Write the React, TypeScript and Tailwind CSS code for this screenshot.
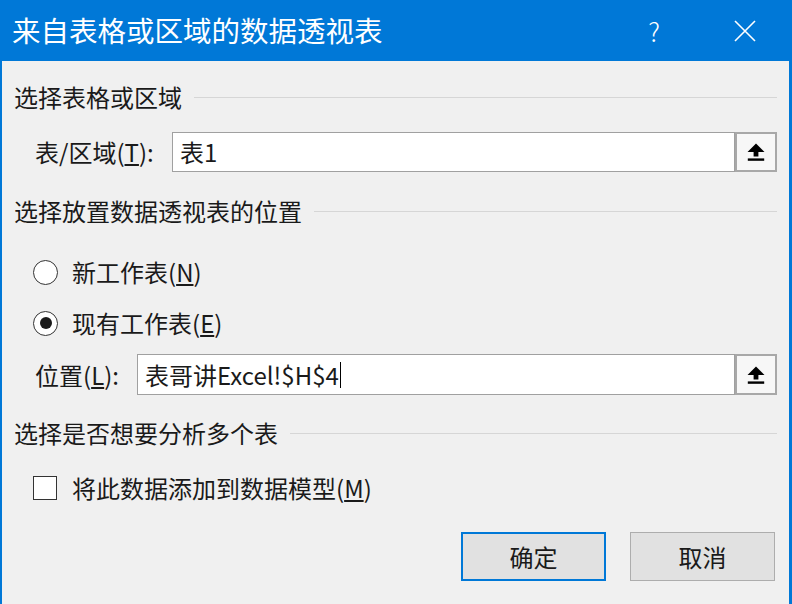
import React from 'react';

function UploadButton() {
  return (
    <div className="flex h-full w-[42px] shrink-0 items-center justify-center border-2 border-[#a8a8a8] bg-[#f7f7f7]">
      <svg width="20" height="20" viewBox="0 0 20 20">
        <polygon points="10,1.5 18.5,10 12.4,10 12.4,14.6 7.6,14.6 7.6,10 1.5,10" fill="#000" />
        <rect x="1.8" y="16.4" width="16.4" height="2.4" fill="#000" />
      </svg>
    </div>
  );
}

function SectionHeader({ text }: { text: string }) {
  return (
    <div className="flex h-[32px] items-center gap-3">
      <span className="whitespace-nowrap">{text}</span>
      <div className="h-px flex-1 bg-[#d6d6d6]" />
    </div>
  );
}

function Radio({ checked }: { checked?: boolean }) {
  return (
    <div className="flex h-[25px] w-[25px] items-center justify-center rounded-full border-[1.5px] border-[#333] bg-white">
      {checked && <div className="h-[12px] w-[12px] rounded-full bg-[#1a1a1a]" />}
    </div>
  );
}

export default function App() {
  return (
    <div
      className="flex h-[604px] w-[792px] flex-col overflow-hidden bg-[#0078d7] text-[24px] text-[#1a1a1a]"
      style={{ fontFamily: '"Noto Sans CJK SC", "Noto Sans", sans-serif' }}
    >
      <div className="flex h-[61px] shrink-0 items-center pl-3 text-white">
        <span className="text-[28.5px] leading-none">来自表格或区域的数据透视表</span>
        <div className="ml-auto flex items-center">
          <span className="w-[30px] text-center text-[26px] font-light leading-none">?</span>
          <div className="ml-[65px] mr-[36px] flex h-[22px] w-[22px] items-center justify-center">
            <svg width="22" height="22" viewBox="0 0 22 22">
              <path d="M1 1 L21 21 M21 1 L1 21" stroke="#fff" strokeWidth="1.6" />
            </svg>
          </div>
        </div>
      </div>

      <div className="ml-[2px] mr-[3px] flex flex-1 flex-col bg-[#f0f0f0] pl-3 pr-[12px] pt-[20px]">
        <SectionHeader text="选择表格或区域" />

        <div className="mt-[19px] flex h-[40px] items-center">
          <span className="ml-[21px] w-[137px] whitespace-nowrap">
            表/区域(<span className="underline underline-offset-2">T</span>):
          </span>
          <div className="flex h-full flex-1 items-center border border-[#a0a0a0] bg-white pl-[7px]">
            表1
          </div>
          <UploadButton />
        </div>

        <div className="mt-[23px]">
          <SectionHeader text="选择放置数据透视表的位置" />
        </div>

        <div className="mt-[29px] flex h-[32px] items-center pl-[19px]">
          <Radio />
          <span className="ml-[14px]">
            新工作表(<span className="underline underline-offset-2">N</span>)
          </span>
        </div>

        <div className="mt-[19px] flex h-[32px] items-center pl-[19px]">
          <Radio checked />
          <span className="ml-[14px]">
            现有工作表(<span className="underline underline-offset-2">E</span>)
          </span>
        </div>

        <div className="mt-[15px] flex h-[41px] items-center">
          <span className="ml-[21px] w-[102px] whitespace-nowrap">
            位置(<span className="underline underline-offset-2">L</span>):
          </span>
          <div className="flex h-full flex-1 items-center border border-[#a0a0a0] bg-white pl-[7px]">
            <span>表哥讲Excel!$H$4</span>
            <span className="ml-px h-[26px] w-px bg-black" />
          </div>
          <UploadButton />
        </div>

        <div className="mt-[22px]">
          <SectionHeader text="选择是否想要分析多个表" />
        </div>

        <div className="mt-[23px] flex h-[32px] items-center pl-[19px]">
          <div className="h-[24px] w-[24px] border-[1.5px] border-[#333] bg-white" />
          <span className="ml-[15px]">
            将此数据添加到数据模型(<span className="underline underline-offset-2">M</span>)
          </span>
        </div>

        <div className="mt-[28px] flex justify-end gap-[24px] pr-[2px]">
          <div className="flex h-[49px] w-[145px] items-center justify-center border-2 border-[#0078d7] bg-[#e1e1e1]">
            确定
          </div>
          <div className="flex h-[49px] w-[145px] items-center justify-center border border-[#adadad] bg-[#e1e1e1]">
            取消
          </div>
        </div>
      </div>
    </div>
  );
}
